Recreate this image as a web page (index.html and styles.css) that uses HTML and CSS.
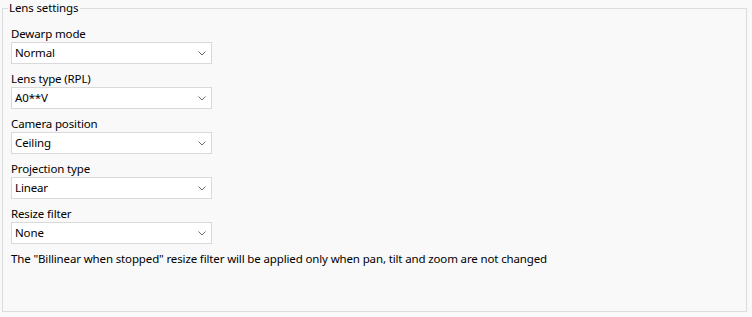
FILE: index.html
```html
<!DOCTYPE html>
<html>
<head>
<meta charset="utf-8">
<link rel="stylesheet" href="styles.css">
</head>
<body>
<fieldset class="group">
  <legend class="group-title">Lens settings</legend>
  <div class="field">
    <div class="field-label">Dewarp mode</div>
    <div class="combo"><span class="combo-value">Normal</span><svg class="chev" width="8" height="5" viewBox="0 0 8 5"><path d="M0.5 0.5 L4 4 L7.5 0.5" fill="none" stroke="#6a6a6a" stroke-width="1"/></svg></div>
  </div>
  <div class="field">
    <div class="field-label">Lens type (RPL)</div>
    <div class="combo"><span class="combo-value">A0**V</span><svg class="chev" width="8" height="5" viewBox="0 0 8 5"><path d="M0.5 0.5 L4 4 L7.5 0.5" fill="none" stroke="#6a6a6a" stroke-width="1"/></svg></div>
  </div>
  <div class="field">
    <div class="field-label">Camera position</div>
    <div class="combo"><span class="combo-value">Ceiling</span><svg class="chev" width="8" height="5" viewBox="0 0 8 5"><path d="M0.5 0.5 L4 4 L7.5 0.5" fill="none" stroke="#6a6a6a" stroke-width="1"/></svg></div>
  </div>
  <div class="field">
    <div class="field-label">Projection type</div>
    <div class="combo"><span class="combo-value">Linear</span><svg class="chev" width="8" height="5" viewBox="0 0 8 5"><path d="M0.5 0.5 L4 4 L7.5 0.5" fill="none" stroke="#6a6a6a" stroke-width="1"/></svg></div>
  </div>
  <div class="field">
    <div class="field-label">Resize filter</div>
    <div class="combo"><span class="combo-value">None</span><svg class="chev" width="8" height="5" viewBox="0 0 8 5"><path d="M0.5 0.5 L4 4 L7.5 0.5" fill="none" stroke="#6a6a6a" stroke-width="1"/></svg></div>
  </div>
  <p class="note">The "Billinear when stopped" resize filter will be applied only when pan, tilt and zoom are not changed</p>
</fieldset>
</body>
</html>
```
FILE: styles.css
```css
html, body {
  margin: 0;
  padding: 0;
  background: #f9f9f9;
}
body {
  font-family: "Noto Sans", "Open Sans", sans-serif;
  font-size: 11.5px;
  letter-spacing: -0.14px;
  line-height: 16px;
  color: #000;
  width: 752px;
  height: 317px;
  overflow: hidden;
}
.group {
  box-sizing: border-box;
  margin: 0 0 0 2px;
  width: 745px;
  height: 312px;
  border: 1px solid #dcdcdc;
  padding: 10px 8px 0 8px;
  min-width: 0;
}
.group-title {
  padding: 0 2px 0 1px;
  margin-left: -3px;
  line-height: 16px;
}
.field {
  display: flex;
  flex-direction: column;
  margin-bottom: 7px;
}
.field-label {
  line-height: 16px;
}
.combo {
  box-sizing: border-box;
  width: 201px;
  height: 22px;
  background: #fff;
  border: 1px solid #d9d9d9;
  display: flex;
  align-items: center;
  justify-content: space-between;
  padding: 0 5px 0 3px;
}
.combo-value {
  line-height: 16px;
}
.chev {
  display: block;
}
.note {
  margin: 0;
  line-height: 16px;
}
```
